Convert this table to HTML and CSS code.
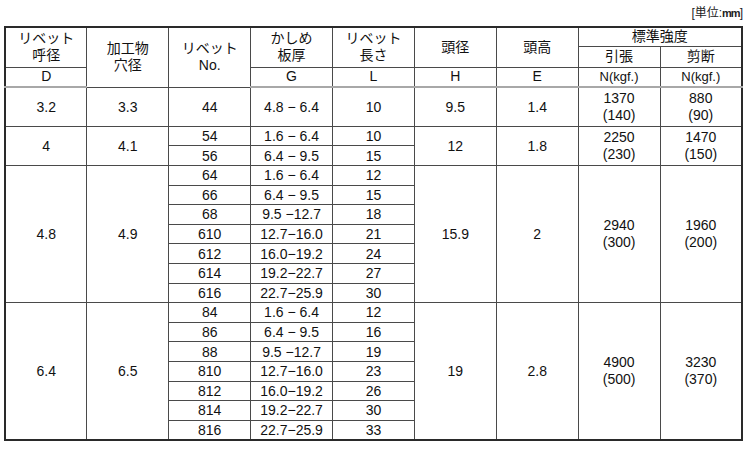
FILE: index.html
```html
<!DOCTYPE html>
<html lang="ja">
<head>
<meta charset="utf-8">
<link rel="stylesheet" href="styles.css">
</head>
<body>
<div class="page">
  <div class="unit">[単位:<span class="mm">mm</span>]</div>
  <table class="spec">
    <colgroup>
      <col><col><col><col><col><col><col><col><col>
    </colgroup>
    <thead>
      <tr class="h1">
        <th rowspan="2">リベット<br>呼径</th>
        <th rowspan="3" class="tall">加工物<br>穴径</th>
        <th rowspan="3" class="tall">リベット<br>No.</th>
        <th rowspan="2">かしめ<br>板厚</th>
        <th rowspan="2">リベット<br>長さ</th>
        <th rowspan="2">頭径</th>
        <th rowspan="2">頭高</th>
        <th colspan="2">標準強度</th>
      </tr>
      <tr class="h2">
        <th>引張</th>
        <th>剪断</th>
      </tr>
      <tr class="h3">
        <th>D</th>
        <th>G</th>
        <th>L</th>
        <th>H</th>
        <th>E</th>
        <th class="small">N(kgf.)</th>
        <th class="small">N(kgf.)</th>
      </tr>
    </thead>
    <tbody>
      <tr class="r2">
        <td>3.2</td><td>3.3</td><td>44</td><td>4.8 − 6.4</td><td>10</td><td>9.5</td><td>1.4</td>
        <td class="two">1370<br>(140)</td><td class="two">880<br>(90)</td>
      </tr>
    </tbody>
    <tbody>
      <tr class="r1">
        <td rowspan="2">4</td><td rowspan="2">4.1</td><td>54</td><td>1.6 − 6.4</td><td>10</td>
        <td rowspan="2">12</td><td rowspan="2">1.8</td>
        <td rowspan="2" class="two">2250<br>(230)</td><td rowspan="2" class="two">1470<br>(150)</td>
      </tr>
      <tr class="r1"><td>56</td><td>6.4 − 9.5</td><td>15</td></tr>
    </tbody>
    <tbody>
      <tr class="r1">
        <td rowspan="7">4.8</td><td rowspan="7">4.9</td><td>64</td><td>1.6 − 6.4</td><td>12</td>
        <td rowspan="7">15.9</td><td rowspan="7">2</td>
        <td rowspan="7" class="two">2940<br>(300)</td><td rowspan="7" class="two">1960<br>(200)</td>
      </tr>
      <tr class="r1"><td>66</td><td>6.4 − 9.5</td><td>15</td></tr>
      <tr class="r1"><td>68</td><td>9.5 −12.7</td><td>18</td></tr>
      <tr class="r1"><td>610</td><td>12.7−16.0</td><td>21</td></tr>
      <tr class="r1"><td>612</td><td>16.0−19.2</td><td>24</td></tr>
      <tr class="r1"><td>614</td><td>19.2−22.7</td><td>27</td></tr>
      <tr class="r1"><td>616</td><td>22.7−25.9</td><td>30</td></tr>
    </tbody>
    <tbody>
      <tr class="r1">
        <td rowspan="7">6.4</td><td rowspan="7">6.5</td><td>84</td><td>1.6 − 6.4</td><td>12</td>
        <td rowspan="7">19</td><td rowspan="7">2.8</td>
        <td rowspan="7" class="two">4900<br>(500)</td><td rowspan="7" class="two">3230<br>(370)</td>
      </tr>
      <tr class="r1"><td>86</td><td>6.4 − 9.5</td><td>16</td></tr>
      <tr class="r1"><td>88</td><td>9.5 −12.7</td><td>19</td></tr>
      <tr class="r1"><td>810</td><td>12.7−16.0</td><td>23</td></tr>
      <tr class="r1"><td>812</td><td>16.0−19.2</td><td>26</td></tr>
      <tr class="r1"><td>814</td><td>19.2−22.7</td><td>30</td></tr>
      <tr class="r1"><td>816</td><td>22.7−25.9</td><td>33</td></tr>
    </tbody>
  </table>
</div>
</body>
</html>
```

FILE: styles.css
```css
html, body {
  margin: 0;
  padding: 0;
  background: #ffffff;
}

.page {
  padding: 0 0 0 4px;
  width: 739px;
  font-family: "Liberation Sans", "Noto Sans CJK JP", sans-serif;
  color: #111111;
}

.unit {
  height: 26px;
  box-sizing: border-box;
  padding-top: 6px;
  text-align: right;
  font-size: 12px;
  line-height: 14px;
  color: #222;
}

.unit .mm {
  letter-spacing: -1px;
  font-weight: bold;
  font-size: 11px;
}

.spec {
  width: 739px;
  table-layout: fixed;
  border-collapse: collapse;
  border: 2px solid #2a2a2a;
  font-size: 14px;
}

.spec th,
.spec td {
  border: 1px solid #4a4a4a;
  padding: 0;
  text-align: center;
  vertical-align: middle;
  font-weight: normal;
  line-height: 17px;
  white-space: nowrap;
  overflow: hidden;
}

.spec tbody td {
  line-height: 16px;
}

.spec .h1 { height: 19px; }
.spec .h2 { height: 21px; }
.spec .h3 { height: 20px; }

.spec .h3 th {
  border-bottom: 2px solid #a8a8a8;
  font-size: 14px;
}

.spec .h3 th.small {
  font-size: 13px;
}

.spec .r1 { height: 19.6px; }
.spec .r2 { height: 39.3px; }

.spec td.two {
  line-height: 17px;
}
```
